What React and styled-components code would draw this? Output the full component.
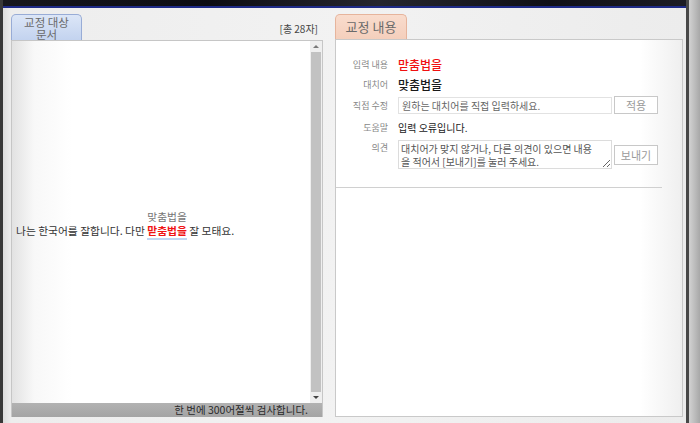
import React from "react";
import styled, { createGlobalStyle } from "styled-components";

const GlobalStyle = createGlobalStyle`
  html, body {
    margin: 0;
    padding: 0;
  }
  body {
    width: 700px;
    height: 423px;
    overflow: hidden;
    font-family: "Noto Sans CJK KR", "Noto Sans", sans-serif;
    background: #b0b0b0;
  }
`;

const sentence = {
  before: "나는 한국어를 잘합니다. 다만 ",
  wrong: "맏춤법을",
  fixed: "맞춤법을",
  after: " 잘 모태요.",
};

const App = () => {
  return (
    <Screen>
      <GlobalStyle />
      <Window>
        <TopBand />
        <Body>
          <LeftSection>
            <TabRow>
              <Tab $tone="blue" $w={71} $h={26}>
                교정 대상 문서
              </Tab>
              <Count>[총 28자]</Count>
            </TabRow>
            <Frame>
              <DocRow>
                <DocArea>
                  <p>
                    {sentence.before}
                    <Annot>
                      <Hint>{sentence.fixed}</Hint>
                      <Wrong>{sentence.wrong}</Wrong>
                    </Annot>
                    {sentence.after}
                  </p>
                </DocArea>
                <Scrollbar>
                  <ScrollArrow $dir="up" />
                  <ScrollThumb />
                  <ScrollArrow $dir="down" />
                </Scrollbar>
              </DocRow>
              <StatusBar>한 번에 300어절씩 검사합니다.</StatusBar>
            </Frame>
          </LeftSection>

          <RightSection>
            <TabRow $h={25}>
              <Tab $tone="peach" $w={72} $h={25}>
                교정 내용
              </Tab>
            </TabRow>
            <Panel>
              <Form>
                <Label>입력 내용</Label>
                <Value>
                  <ValueText $tone="red">맏춤법을</ValueText>
                </Value>

                <Label>대치어</Label>
                <Value>
                  <ValueText $tone="strong">맞춤법을</ValueText>
                </Value>

                <Label>직접 수정</Label>
                <Value>
                  <Input type="text" placeholder="원하는 대치어를 직접 입력하세요." />
                  <Button $h={18}>적용</Button>
                </Value>

                <Label>도움말</Label>
                <Value>
                  <ValueText>입력 오류입니다.</ValueText>
                </Value>

                <Label $top>의견</Label>
                <Value $top>
                  <Opinion
                    defaultValue={
                      "대치어가 맞지 않거나, 다른 의견이 있으면 내용\n을 적어서 [보내기]를 눌러 주세요."
                    }
                  />
                  <Button $h={20}>보내기</Button>
                </Value>
              </Form>
            </Panel>
          </RightSection>
        </Body>
      </Window>
      <Gutter />
    </Screen>
  );
};

export default App;

const Screen = styled.div`
  display: flex;
  width: 700px;
  height: 423px;
`;

const Window = styled.div`
  width: 689px;
  box-sizing: border-box;
  border-left: 3px solid #383838;
  border-right: 3px solid #484848;
  display: flex;
  flex-direction: column;
  background: linear-gradient(90deg, #dcdcdc 0, #ededed 8px, #f2f2f2 50%, #ececec 100%);
`;

const TopBand = styled.div`
  height: 6px;
  background: linear-gradient(90deg, #17171d 0, #0c0c12 30%, #26262e 55%, #101016 80%, #1c1c24 100%);
  border-bottom: 2px solid #1e2a86;
`;

const Body = styled.div`
  flex: 1;
  display: flex;
  gap: 12px;
  padding: 6px 3px 6px 8px;
  min-height: 0;
`;

const LeftSection = styled.div`
  width: 312px;
  display: flex;
  flex-direction: column;
`;

const RightSection = styled.div`
  flex: 1;
  display: flex;
  flex-direction: column;
`;

const TabRow = styled.div`
  height: ${(p) => p.$h || 26}px;
  display: flex;
  align-items: flex-end;
  justify-content: space-between;
`;

const tones = {
  blue: {
    bg: "linear-gradient(180deg, #dce6f7 0, #c3d3ef 100%)",
    border: "#98acd6",
    size: 11.5,
    line: "12px",
    pad: "1px 8px 0",
  },
  peach: {
    bg: "linear-gradient(180deg, #f9dccd 0, #f4cfbc 100%)",
    border: "#e6b49c",
    size: 13,
    line: "23px",
    pad: "0",
  },
};

const Tab = styled.div`
  width: ${(p) => p.$w}px;
  height: ${(p) => p.$h}px;
  box-sizing: border-box;
  border: 1px solid ${(p) => tones[p.$tone].border};
  border-bottom: none;
  border-radius: 5px 5px 0 0;
  background: ${(p) => tones[p.$tone].bg};
  color: #6a6a6a;
  font-size: ${(p) => tones[p.$tone].size}px;
  line-height: ${(p) => tones[p.$tone].line};
  padding: ${(p) => tones[p.$tone].pad};
  text-align: center;
`;

const Count = styled.span`
  align-self: center;
  margin-right: 5px;
  margin-top: 2px;
  font-size: 10px;
  color: #444;
`;

const Frame = styled.div`
  flex: 1;
  display: flex;
  flex-direction: column;
  border: 1px solid #c6c6c6;
  border-bottom: none;
  min-height: 0;
`;

const DocRow = styled.div`
  flex: 1;
  display: flex;
  min-height: 0;
`;

const DocArea = styled.div`
  flex: 1;
  display: flex;
  align-items: center;
  padding-left: 4px;
  background: linear-gradient(90deg, #e2e2e2 0, #f8f8f8 22px, #fff 60px);
  font-size: 10.75px;
  line-height: 14px;
  color: #333;

  p {
    margin: 0;
    margin-top: 4px;
  }
`;

const Annot = styled.span`
  display: inline-block;
  text-align: center;
`;

const Hint = styled.span`
  display: block;
  color: #777;
`;

const Wrong = styled.span`
  color: #f01414;
  font-weight: 700;
  border-bottom: 2px solid #c2d6f2;
`;

const Scrollbar = styled.div`
  width: 12px;
  background: #efefef;
  display: flex;
  flex-direction: column;
  align-items: center;
`;

const ScrollArrow = styled.div`
  height: 11px;
  width: 100%;
  display: flex;
  align-items: center;
  justify-content: center;

  &::after {
    content: "";
    border-left: 3px solid transparent;
    border-right: 3px solid transparent;
    ${(p) =>
      p.$dir === "up"
        ? "border-bottom: 3px solid #7a7a7a;"
        : "border-top: 3px solid #444;"}
  }
`;

const ScrollThumb = styled.div`
  flex: 1;
  width: 10px;
  background: #c2c2c2;
`;

const StatusBar = styled.div`
  height: 14px;
  background: linear-gradient(180deg, #b2b2b2, #a4a4a4);
  text-align: right;
  padding-right: 14px;
  font-size: 10.5px;
  line-height: 14px;
  color: #2a2a2a;
`;

const Panel = styled.div`
  flex: 1;
  border: 1px solid #c9c9c9;
  background: linear-gradient(90deg, #fff 0, #fff 88%, #efefef 100%);
`;

const Form = styled.div`
  display: grid;
  grid-template-columns: 43px 1fr;
  grid-template-rows: 20px 20px 22px 22px 31px;
  column-gap: 10px;
  padding: 14px 0 18px 9px;
  margin-right: 20px;
  border-bottom: 1px solid #d0d0d0;
`;

const Label = styled.div`
  font-size: 9px;
  color: #888;
  text-align: right;
  white-space: nowrap;
  align-self: ${(p) => (p.$top ? "start" : "center")};
  padding-top: ${(p) => (p.$top ? 3 : 0)}px;
`;

const Value = styled.div`
  display: flex;
  align-items: center;
  gap: 2px;
  padding-top: ${(p) => (p.$top ? 2 : 0)}px;
  align-self: ${(p) => (p.$top ? "start" : "stretch")};
`;

const valueTones = {
  red: { color: "#f01010", size: 12, weight: 500 },
  strong: { color: "#1a1a1a", size: 12, weight: 500 },
  plain: { color: "#222", size: 10, weight: 400 },
};

const ValueText = styled.span`
  color: ${(p) => valueTones[p.$tone || "plain"].color};
  font-size: ${(p) => valueTones[p.$tone || "plain"].size}px;
  font-weight: ${(p) => valueTones[p.$tone || "plain"].weight};
`;

const Input = styled.input`
  width: 214px;
  height: 17px;
  box-sizing: border-box;
  border: 1px solid #e2e2e2;
  padding: 0 3px;
  font-family: inherit;
  font-size: 10px;
  outline: none;

  &::placeholder {
    color: #666;
  }
`;

const Opinion = styled.textarea`
  width: 214px;
  height: 29px;
  box-sizing: border-box;
  border: 1px solid #dcdcdc;
  padding: 1px 2px;
  margin: 0;
  font-family: inherit;
  font-size: 10px;
  line-height: 13px;
  color: #555;
  overflow: hidden;
  resize: both;
  outline: none;
`;

const Button = styled.button`
  width: 44px;
  height: ${(p) => p.$h}px;
  box-sizing: border-box;
  border: 1px solid #c8c8c8;
  background: #fff;
  color: #9a9a9a;
  font-family: inherit;
  font-size: 11px;
  padding: 0;
  border-radius: 0;
`;

const Gutter = styled.div`
  flex: 1;
  background: linear-gradient(90deg, #d2d2d2, #a8a8a8);
`;
